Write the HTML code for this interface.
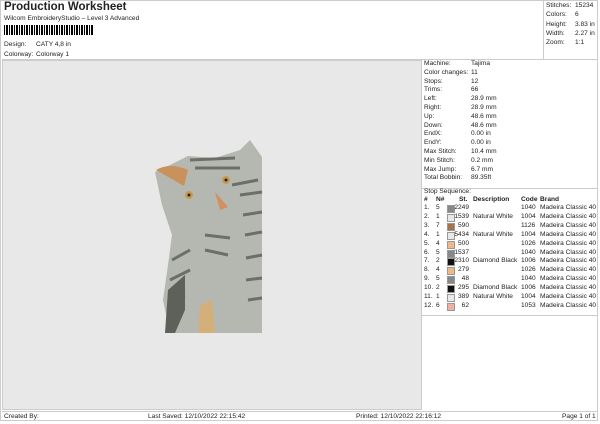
<!DOCTYPE html><html><head><style>
body{margin:0;width:600px;height:424px;background:#fff;font-family:"Liberation Sans",sans-serif;font-size:6.6px;color:#222;position:relative;overflow:hidden}
.a{position:absolute;white-space:nowrap}
.r{position:absolute;left:0;height:9px;width:180px}
.r span{position:absolute;top:0}
.sw{display:inline-block;width:6px;height:6px;border:1px solid #999;top:1px!important}
</style></head><body>
<div class="a" style="left:4px;top:1px;font-size:11.5px;font-weight:bold">Production Worksheet</div>
<div class="a" style="left:4px;top:15px">Wilcom EmbroideryStudio – Level 3 Advanced</div>
<div class="a" style="left:4px;top:25px;width:90px;height:10px;background:repeating-linear-gradient(90deg,#000 0 1px,#fff 1px 2px,#000 2px 4px,#fff 4px 5px)"></div>
<div class="a" style="left:4px;top:41px">Design:</div><div class="a" style="left:36px;top:41px">CATY 4,8 in</div>
<div class="a" style="left:4px;top:51px">Colorway:</div><div class="a" style="left:36px;top:51px">Colorway 1</div>
<div class="a" style="left:0;top:0;width:598px;height:421px;border:1px solid #ccc;box-sizing:border-box"></div>
<div class="a" style="left:2px;top:60px;width:420px;height:350px;background:#e8e8e8;border:1px solid #ccc;box-sizing:border-box"></div>
<div class="a" style="left:543px;top:0;height:60px;border-left:1px solid #ccc"></div>
<div class="a" style="left:2px;top:59px;width:596px;border-top:1px solid #ccc"></div>
<div class="a" style="left:422px;top:188px;width:176px;border-top:1px solid #ccc"></div>
<div class="a" style="left:422px;top:315px;width:176px;border-top:1px solid #ccc"></div>
<div class="a" style="left:2px;top:411px;width:596px;border-top:1px solid #ccc"></div>
<div class="a" style="left:546px;top:1px;line-height:9.3px">Stitches:<br>Colors:<br>Height:<br>Width:<br>Zoom:</div>
<div class="a" style="left:575px;top:1px;line-height:9.3px">15234<br>6<br>3.83 in<br>2.27 in<br>1:1</div>
<div class="a" style="left:424px;top:60px;line-height:8.8px">Machine:<br>Color changes:<br>Stops:<br>Trims:<br>Left:<br>Right:<br>Up:<br>Down:<br>EndX:<br>EndY:<br>Max Stitch:<br>Min Stitch:<br>Max Jump:<br>Total Bobbin:</div>
<div class="a" style="left:471px;top:60px;line-height:8.8px">Tajima<br>11<br>12<br>66<br>28.9 mm<br>28.9 mm<br>48.6 mm<br>48.6 mm<br>0.00 in<br>0.00 in<br>10.4 mm<br>0.2 mm<br>6.7 mm<br>89.35ft</div>
<div class="a" style="left:424px;top:188px">Stop Sequence:</div>
<div class="a" style="left:424px;top:196px;width:176px;height:10px">
<div class="r" style="top:0;font-weight:bold;text-decoration:underline"><span style="left:0">#</span><span style="left:12px">N#</span><span style="left:35px">St.</span><span style="left:49px">Description</span><span style="left:97px">Code</span><span style="left:116px">Brand</span></div>
</div>
<div class="a" style="left:424px;top:204px;width:176px;height:110px">
<div class="r" style="top:0"><span>1.</span><span style="left:12px">5</span><span class="sw" style="left:23px;background:#888"></span><span style="right:135px">2249</span><span style="left:97px">1040</span><span style="left:116px">Madeira Classic 40</span></div>
<div class="r" style="top:8.9px"><span>2.</span><span style="left:12px">1</span><span class="sw" style="left:23px;background:#e8e8ea"></span><span style="right:135px">1539</span><span style="left:49px">Natural White</span><span style="left:97px">1004</span><span style="left:116px">Madeira Classic 40</span></div>
<div class="r" style="top:17.8px"><span>3.</span><span style="left:12px">7</span><span class="sw" style="left:23px;background:#a8734a"></span><span style="right:135px">590</span><span style="left:97px">1126</span><span style="left:116px">Madeira Classic 40</span></div>
<div class="r" style="top:26.7px"><span>4.</span><span style="left:12px">1</span><span class="sw" style="left:23px;background:#e8e8ea"></span><span style="right:135px">5434</span><span style="left:49px">Natural White</span><span style="left:97px">1004</span><span style="left:116px">Madeira Classic 40</span></div>
<div class="r" style="top:35.6px"><span>5.</span><span style="left:12px">4</span><span class="sw" style="left:23px;background:#f0b888"></span><span style="right:135px">500</span><span style="left:97px">1026</span><span style="left:116px">Madeira Classic 40</span></div>
<div class="r" style="top:44.5px"><span>6.</span><span style="left:12px">5</span><span class="sw" style="left:23px;background:#888"></span><span style="right:135px">1537</span><span style="left:97px">1040</span><span style="left:116px">Madeira Classic 40</span></div>
<div class="r" style="top:53.4px"><span>7.</span><span style="left:12px">2</span><span class="sw" style="left:23px;background:#111"></span><span style="right:135px">2310</span><span style="left:49px">Diamond Black</span><span style="left:97px">1006</span><span style="left:116px">Madeira Classic 40</span></div>
<div class="r" style="top:62.3px"><span>8.</span><span style="left:12px">4</span><span class="sw" style="left:23px;background:#f0b888"></span><span style="right:135px">279</span><span style="left:97px">1026</span><span style="left:116px">Madeira Classic 40</span></div>
<div class="r" style="top:71.2px"><span>9.</span><span style="left:12px">5</span><span class="sw" style="left:23px;background:#888"></span><span style="right:135px">48</span><span style="left:97px">1040</span><span style="left:116px">Madeira Classic 40</span></div>
<div class="r" style="top:80.1px"><span>10.</span><span style="left:12px">2</span><span class="sw" style="left:23px;background:#111"></span><span style="right:135px">295</span><span style="left:49px">Diamond Black</span><span style="left:97px">1006</span><span style="left:116px">Madeira Classic 40</span></div>
<div class="r" style="top:89px"><span>11.</span><span style="left:12px">1</span><span class="sw" style="left:23px;background:#e8e8ea"></span><span style="right:135px">389</span><span style="left:49px">Natural White</span><span style="left:97px">1004</span><span style="left:116px">Madeira Classic 40</span></div>
<div class="r" style="top:97.9px"><span>12.</span><span style="left:12px">6</span><span class="sw" style="left:23px;background:#f0b0a0"></span><span style="right:135px">62</span><span style="left:97px">1053</span><span style="left:116px">Madeira Classic 40</span></div>
</div>
<svg class="a" style="left:0;top:0" width="600" height="424">
<path d="M170 333 L163 300 L168 265 L172 235 L162 205 L155 172 L170 165 L188 156 L215 158 L240 150 L250 140 L262 157 L262 333 Z" fill="#b4b8b0"/>
<g stroke="#5a5d57" stroke-width="3" fill="none" opacity="0.8">
<path d="M190 160 L235 158 M195 168 L240 168 M232 185 L258 180 M240 195 L262 192 M243 215 L262 212 M245 235 L262 232 M246 258 L262 255 M246 280 L262 278 M248 300 L262 298 M172 260 L190 250 M170 280 L190 270 M168 300 L185 295 M205 235 L230 238 M205 250 L228 255"/>
</g>
<path d="M168 290 L185 275 L185 310 L175 333 L165 333 Z" fill="#5e615a"/>
<path d="M156 170 Q170 162 188 170 L184 186 Z" fill="#c8925a"/>
<circle cx="189" cy="195" r="4" fill="#c89a50"/><circle cx="226" cy="180" r="4" fill="#c89a50"/>
<circle cx="189" cy="195" r="1.5" fill="#222"/><circle cx="226" cy="180" r="1.5" fill="#222"/>
<path d="M215 192 L228 207 L220 210 Z" fill="#d09060"/>
<path d="M200 305 L212 300 L215 333 L198 333 Z" fill="#d3b07a"/>
</svg>
<div class="a" style="left:4px;top:413px">Created By:</div>
<div class="a" style="left:148px;top:413px">Last Saved: 12/10/2022 22:15:42</div>
<div class="a" style="left:356px;top:413px">Printed: 12/10/2022 22:16:12</div>
<div class="a" style="left:562px;top:413px">Page 1 of 1</div>
</body></html>
